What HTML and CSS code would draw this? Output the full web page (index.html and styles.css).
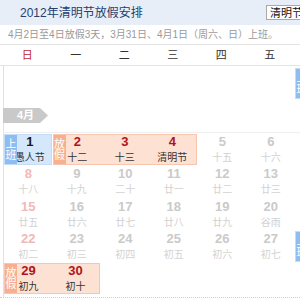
FILE: index.html
```html
<!DOCTYPE html>
<html lang="zh-CN">
<head>
<meta charset="utf-8">
<title>2012年清明节放假安排</title>
<link rel="stylesheet" href="styles.css">
</head>
<body>
<div class="page">
  <div class="head">
    <div class="title">2012年清明节放假安排</div>
    <div class="sel">清明节</div>
  </div>
  <div class="note">4月2日至4日放假3天，3月31日、4月1日（周六、日）上班。</div>
  <div class="weekdays">
    <span class="sun">日</span><span>一</span><span>二</span><span>三</span><span>四</span><span>五</span><span>六</span>
  </div>
  <div class="cal">
    <div class="week march">
      <div class="box work at7"><span class="tag">上班</span><div class="day"><b>31</b><i>初十</i></div></div>
    </div>
    <div class="month"><span class="mtag">4月</span></div>
    <div class="weeks">
      <div class="week">
        <div class="box work"><span class="tag">上班</span><div class="day"><b>1</b><i>愚人节</i></div></div>
        <div class="box off span3"><span class="tag">放假</span><div class="day"><b>2</b><i>十二</i></div><div class="day"><b>3</b><i>十三</i></div><div class="day"><b>4</b><i>清明节</i></div></div>
        <div class="day"><b>5</b><i>十五</i></div>
        <div class="day"><b>6</b><i>十六</i></div>
        <div class="day"><b>7</b><i>十七</i></div>
      </div>
      <div class="week">
        <div class="day sun"><b>8</b><i>十八</i></div>
        <div class="day"><b>9</b><i>十九</i></div>
        <div class="day"><b>10</b><i>二十</i></div>
        <div class="day"><b>11</b><i>廿一</i></div>
        <div class="day"><b>12</b><i>廿二</i></div>
        <div class="day"><b>13</b><i>廿三</i></div>
        <div class="day"><b>14</b><i>廿四</i></div>
      </div>
      <div class="week">
        <div class="day sun"><b>15</b><i>廿五</i></div>
        <div class="day"><b>16</b><i>廿六</i></div>
        <div class="day"><b>17</b><i>廿七</i></div>
        <div class="day"><b>18</b><i>廿八</i></div>
        <div class="day"><b>19</b><i>廿九</i></div>
        <div class="day"><b>20</b><i>谷雨</i></div>
        <div class="day"><b>21</b><i>初一</i></div>
      </div>
      <div class="week">
        <div class="day sun"><b>22</b><i>初二</i></div>
        <div class="day"><b>23</b><i>初三</i></div>
        <div class="day"><b>24</b><i>初四</i></div>
        <div class="day"><b>25</b><i>初五</i></div>
        <div class="day"><b>26</b><i>初六</i></div>
        <div class="day"><b>27</b><i>初七</i></div>
        <div class="box work"><span class="tag">上班</span><div class="day"><b>28</b><i>初八</i></div></div>
      </div>
      <div class="week">
        <div class="box off span2"><span class="tag">放假</span><div class="day"><b>29</b><i>初九</i></div><div class="day"><b>30</b><i>初十</i></div></div>
      </div>
    </div>
    <div class="foot"></div>
  </div>
</div>
</body>
</html>
```
FILE: styles.css
```css
html, body {
  margin: 0;
  padding: 0;
  width: 300px;
  height: 300px;
  overflow: hidden;
  background: #fff;
}
.page {
  width: 300px;
  font-family: "Liberation Sans", "Noto Sans CJK SC", sans-serif;
}
.head {
  height: 25px;
  background: #e8eef7;
  display: flex;
  align-items: center;
  justify-content: space-between;
  padding-left: 20px;
}
.title {
  font-size: 12px;
  color: #233f70;
  line-height: 14px;
}
.sel {
  width: 46px;
  height: 15px;
  margin-right: -12px;
  box-sizing: border-box;
  border: 1px solid #a9a9a9;
  background: #fff;
  font-size: 11px;
  line-height: 13px;
  padding-left: 3px;
  color: #111;
  font-family: "Noto Sans CJK SC", sans-serif;
}
.note {
  height: 19px;
  line-height: 19px;
  padding-left: 8px;
  font-size: 10px;
  color: #9a9a9a;
  border-bottom: 1px solid #e4e4e4;
  white-space: nowrap;
}
.weekdays {
  display: grid;
  grid-template-columns: repeat(7, 48.5px);
  padding-left: 3px;
  height: 20px;
  line-height: 20px;
  font-size: 11px;
  color: #333;
  text-align: center;
  border-bottom: 1px solid #e4e4e4;
  width: 340px;
}
.weekdays .sun { color: #c0282d; }
.cal {
  margin-left: 3px;
  border-left: 1px solid #d8e3ef;
  width: 340px;
}
.week {
  display: grid;
  grid-template-columns: repeat(7, 48.5px);
  height: 30px;
}
.march {
  padding-top: 2px;
  height: 31px;
}
.month {
  height: 15px;
  padding: 9px 0 9px;
  border-bottom: 1px solid #efefef;
  margin-left: -1px;
}
.mtag {
  display: block;
  width: 45px;
  height: 15px;
  background: #c9c9c9;
  color: #fff;
  font-size: 11px;
  font-weight: bold;
  line-height: 15px;
  padding-left: 14px;
  box-sizing: border-box;
  clip-path: polygon(0 0, 37px 0, 45px 50%, 37px 100%, 0 100%);
}
.weeks {
  display: flex;
  flex-direction: column;
  gap: 2.25px;
  margin-top: 1px;
}
.day {
  text-align: center;
  padding-top: 1px;
}
.day b {
  display: block;
  font-size: 13px;
  line-height: 14px;
  font-weight: bold;
  color: #cacaca;
}
.day i {
  display: block;
  font-style: normal;
  font-size: 10px;
  line-height: 15px;
  color: #d2d2d2;
  font-family: "Noto Sans CJK SC", sans-serif;
}
.day.sun b { color: #f2b8b8; }
.box {
  position: relative;
  display: grid;
  grid-template-columns: repeat(1, 1fr);
  box-sizing: border-box;
  margin-right: 1px;
}
.box .day { padding-top: 0; }
.box.work .day { padding-left: 4px; }
.box.span2 { grid-column: span 2; grid-template-columns: repeat(2, 1fr); }
.box.span3 { grid-column: span 3; grid-template-columns: repeat(3, 1fr); }
.box.at7 { grid-column: 7; }
.box .tag {
  position: absolute;
  left: 0;
  top: 0;
  bottom: 0;
  width: 12px;
  color: #fff;
  font-size: 11px;
  line-height: 11px;
  padding-top: 3px;
  text-align: center;
  font-family: "Noto Sans CJK SC", sans-serif;
  overflow: hidden;
}
.box.work {
  background: #d4e7fb;
  border: 1px solid #c4dcf5;
}
.box.work .tag { background: #8dbdf1; }
.box.work b { color: #1a1a1a; }
.box.work i { color: #333; }
.box.off {
  background: #fde1d2;
  border: 1px solid #f6c6ae;
}
.box.off .tag { background: #f6b090; }
.box.off b { color: #b0131c; }
.box.off i { color: #333; }
.foot {
  margin-top: 4px;
  border-top: 1px dotted #cfcfcf;
  margin-left: -4px;
}
```
